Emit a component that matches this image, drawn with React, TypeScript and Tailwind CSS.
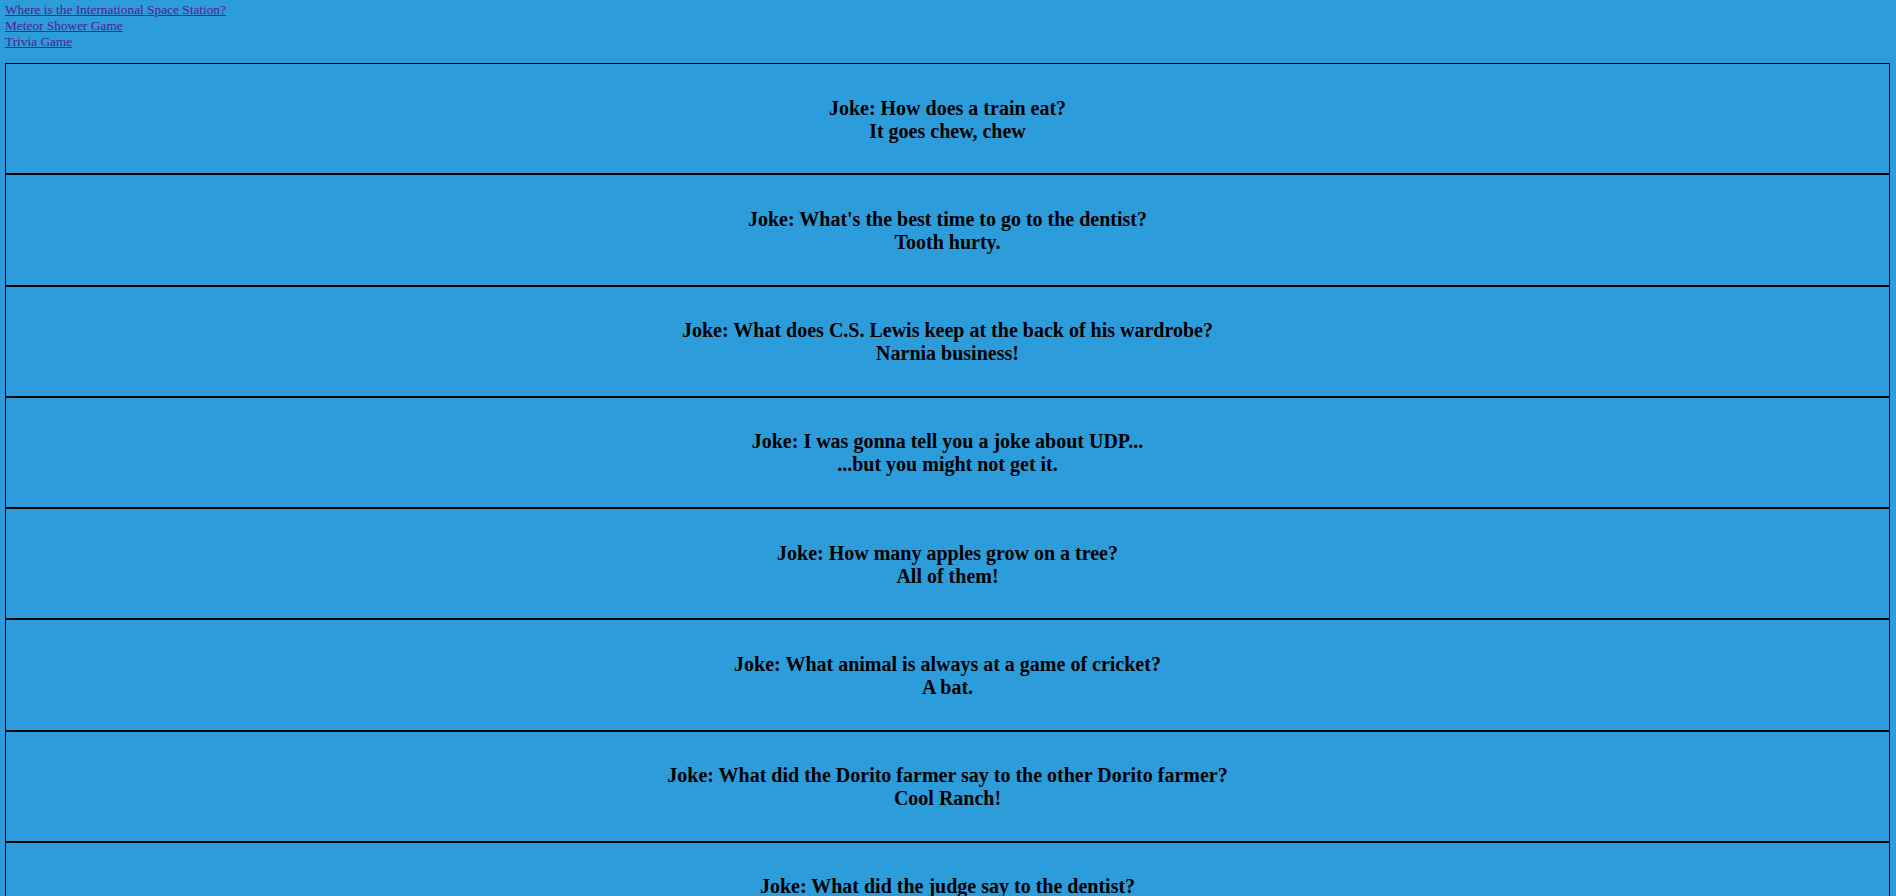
import React from "react";

const jokes: [string, string][] = [
  ["How does a train eat?", "It goes chew, chew"],
  ["What's the best time to go to the dentist?", "Tooth hurty."],
  ["What does C.S. Lewis keep at the back of his wardrobe?", "Narnia business!"],
  ["I was gonna tell you a joke about UDP...", "...but you might not get it."],
  ["How many apples grow on a tree?", "All of them!"],
  ["What animal is always at a game of cricket?", "A bat."],
  ["What did the Dorito farmer say to the other Dorito farmer?", "Cool Ranch!"],
  ["What did the judge say to the dentist?", "Do you swear to pull the tooth, the whole tooth and nothing but the tooth?"],
  ["Why did the scarecrow win an award?", "Because he was outstanding in his field."],
];

export default function App() {
  return (
    <div className="min-h-screen bg-[#2d9cdb] font-['Liberation_Serif',serif] text-black pb-4">
      <div className="pl-[5px] pt-[2px] text-[13.33px] leading-[16px] flex flex-col items-start">
        <a href="#" className="underline text-[#551a8b]">Where is the International Space Station?</a>
        <a href="#" className="underline text-[#551a8b]">Meteor Shower Game</a>
        <a href="#" className="underline text-[#551a8b]">Trivia Game</a>
      </div>
      <div className="ml-[5px] w-[1885px] mt-[13px]">
        {jokes.map(([q, a], i) => (
          <div key={i} className="h-[111.25px] border border-black flex items-center justify-center pt-[2px]">
            <div className="text-center font-bold text-[20px] leading-[23px]">
              <div>Joke: {q}</div>
              <div>{a}</div>
            </div>
          </div>
        ))}
      </div>
    </div>
  );
}
